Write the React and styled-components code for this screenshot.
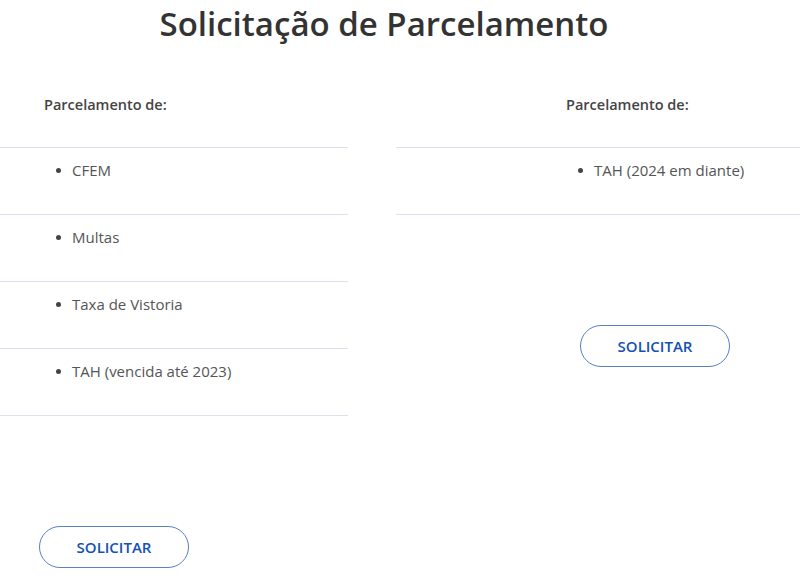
import React from 'react'
import styled, { createGlobalStyle } from 'styled-components'

const GlobalStyle = createGlobalStyle`
  body {
    margin: 0;
    background: #fff;
    font-family: "Open Sans", "Liberation Sans", sans-serif;
  }
`

const columns = [
  {
    inset: 44,
    items: ['CFEM', 'Multas', 'Taxa de Vistoria', 'TAH (vencida até 2023)'],
    buttonInset: 39,
  },
  {
    inset: 170,
    items: ['TAH (2024 em diante)'],
    buttonInset: 184,
  },
]

function App() {
  return (
    <Page>
      <GlobalStyle />
      <Title>Solicitação de Parcelamento</Title>
      <Columns>
        {columns.map((col, i) => (
          <Column key={i}>
            <Heading $inset={col.inset}>Parcelamento de:</Heading>
            <List>
              {col.items.map((item) => (
                <Item key={item} $inset={col.inset + 12}>
                  <Dot />
                  {item}
                </Item>
              ))}
            </List>
            <Button $inset={col.buttonInset}>SOLICITAR</Button>
          </Column>
        ))}
      </Columns>
    </Page>
  )
}

const Page = styled.div`
  width: 800px;
  height: 576px;
  overflow: hidden;
`

const Title = styled.h1`
  margin: 0;
  padding: 3px 32px 0 0;
  text-align: center;
  font-size: 33px;
  line-height: 42px;
  font-weight: 600;
  color: #333;
`

const Columns = styled.div`
  display: grid;
  grid-template-columns: 348px 1fr;
  column-gap: 48px;
  margin-top: 50px;
`

const Column = styled.div`
  display: flex;
  flex-direction: column;
  align-items: flex-start;
`

const Heading = styled.h3`
  margin: 0 0 32px;
  padding-left: ${(p) => p.$inset}px;
  font-size: 14.5px;
  line-height: 20px;
  font-weight: 600;
  color: #444;
`

const List = styled.ul`
  list-style: none;
  margin: 0;
  padding: 0;
  width: 100%;
  border-top: 1px solid #dde1ee;
`

const Item = styled.li`
  display: flex;
  align-items: center;
  gap: 11px;
  height: 67px;
  box-sizing: border-box;
  padding: 12px 0 34px ${(p) => p.$inset}px;
  border-bottom: 1px solid #dde1ee;
  font-size: 15px;
  line-height: 20px;
  color: #555;
`

const Dot = styled.span`
  width: 5px;
  height: 5px;
  border-radius: 50%;
  background: #444;
  flex: none;
`

const Button = styled.button`
  margin: 110px 0 0 ${(p) => p.$inset}px;
  width: 150px;
  height: 42px;
  border: 1px solid #5a7fc4;
  border-radius: 21px;
  background: #fff;
  color: #1351b4;
  font-family: inherit;
  font-size: 15px;
  font-weight: 600;
  cursor: pointer;
`

export default App
